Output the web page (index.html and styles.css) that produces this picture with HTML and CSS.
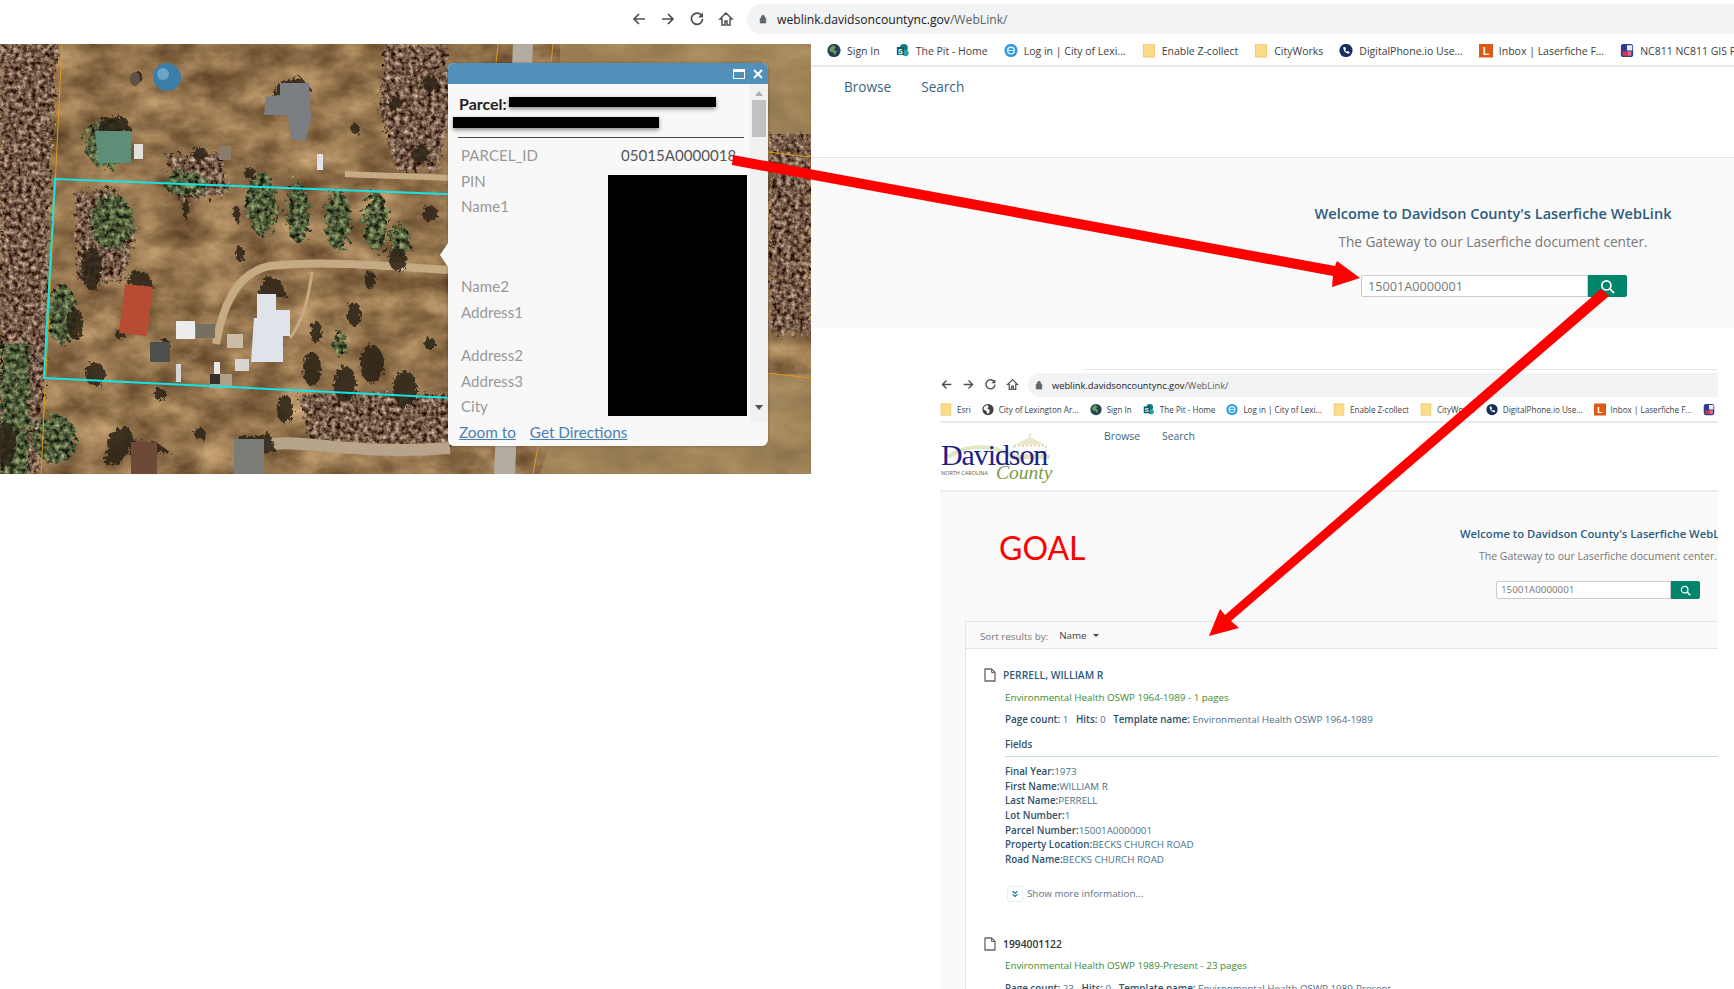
FILE: index.html
```html
<!DOCTYPE html>
<html lang="en">
<head>
  <meta charset="UTF-8" />
  <title>Parcel to WebLink search</title>
  <link rel="stylesheet" href="styles.css">
</head>
<body>

  <!-- shared icons -->
  <svg class="defs" width="0" height="0">
    <symbol id="i-back" viewBox="0 0 16 16"><path d="M14 8H3M8 3L3 8l5 5" fill="none" stroke="currentColor" stroke-width="1.7"/></symbol>
    <symbol id="i-fwd" viewBox="0 0 16 16"><path d="M2 8h11M8 3l5 5-5 5" fill="none" stroke="currentColor" stroke-width="1.7"/></symbol>
    <symbol id="i-reload" viewBox="0 0 16 16"><path d="M13 5.2A5.6 5.6 0 1 0 13.6 8" fill="none" stroke="currentColor" stroke-width="1.7"/><path d="M14 1.5v5h-5z" fill="currentColor"/></symbol>
    <symbol id="i-home" viewBox="0 0 16 16"><path d="M8 2L2 8h2v6h3v-4h2v4h3V8h2z" fill="none" stroke="currentColor" stroke-width="1.5"/></symbol>
    <symbol id="i-lock" viewBox="0 0 10 12"><path d="M1.5 5h7v6h-7zM3 5V3.4a2 2 0 0 1 4 0V5" fill="currentColor" stroke="currentColor" stroke-width=".8" fill-opacity=".9"/></symbol>
    <symbol id="i-folder" viewBox="0 0 14 16"><path d="M1 1h12v14H1z" fill="#fbdc8a" stroke="#eec768"/></symbol>
    <symbol id="i-earth" viewBox="0 0 16 16"><circle cx="8" cy="8" r="7.5" fill="#23405a"/><path d="M3 5l4-3 3 2-2 3 3 2-2 4-2-3-4-1z" fill="#6e9a56"/></symbol>
    <symbol id="i-pit" viewBox="0 0 16 16"><circle cx="9" cy="5" r="4.5" fill="#0b7c84"/><circle cx="11" cy="11" r="3.5" fill="#22a6a8"/><path d="M1 4h8v9H1z" fill="#075f66"/><text x="5" y="11.5" font-size="8" font-family="Liberation Sans" font-weight="700" fill="#fff" text-anchor="middle">S</text></symbol>
    <symbol id="i-login" viewBox="0 0 16 16"><circle cx="8" cy="8" r="7.5" fill="#2f9be0"/><circle cx="8" cy="8" r="3.8" fill="none" stroke="#d8f0fc" stroke-width="1.6"/><path d="M4 8h8" stroke="#d8f0fc" stroke-width="1.2"/></symbol>
    <symbol id="i-phone" viewBox="0 0 16 16"><circle cx="8" cy="8" r="7.5" fill="#15305c"/><path d="M5 4l2 0 1 2.5-1 1c.5 1 1.200 1.700 2 2l1-1 2 1.300v1.700c-4 .5-7.500-3-7-7.500z" fill="#fff"/></symbol>
    <symbol id="i-inbox" viewBox="0 0 16 16"><path d="M0 0h16v16H0z" fill="#dc5a16"/><text x="8" y="13" font-size="12" font-family="Liberation Sans" font-weight="700" fill="#fff" text-anchor="middle">L</text></symbol>
    <symbol id="i-nc811" viewBox="0 0 16 16"><rect x="1" y="0.500" width="14" height="15" rx="3" fill="#2b3f8e"/><path d="M8 2h6v6H8z" fill="#e8eef8"/><path d="M3 9h6v5H3z" fill="#d8344c"/><path d="M9 9h4v5H9z" fill="#f06a8c"/></symbol>
    <symbol id="i-globe" viewBox="0 0 16 16"><circle cx="8" cy="8" r="7.500" fill="#3c4043"/><path d="M3 4l4-2 2 2-2 3 3 1 0 4-3 2-1-4-4-2z" fill="#fff"/></symbol>
    <symbol id="i-search" viewBox="0 0 16 16"><circle cx="6.800" cy="6.800" r="4.800" fill="none" stroke="#fff" stroke-width="1.800"/><path d="M10.300 10.300L15 15" stroke="#fff" stroke-width="2"/></symbol>
    <symbol id="i-doc" viewBox="0 0 12 14"><path d="M1 1h6.500L11 4.500V13H1z" fill="#fff" stroke="#666" stroke-width="1.300" stroke-linejoin="round"/><path d="M7.500 1v3.500H11" fill="none" stroke="#666"/></symbol>
  </svg>

  <header class="toolbar">
    <div class="nav-icons">
      <svg><use href="#i-back"/></svg>
      <svg><use href="#i-fwd"/></svg>
      <svg><use href="#i-reload"/></svg>
      <svg><use href="#i-home"/></svg>
    </div>
    <div class="address">
      <svg class="lock"><use href="#i-lock"/></svg>
      <span class="host">weblink.davidsoncountync.gov</span><span class="path">/WebLink/</span>
    </div>
  </header>

  <main class="collage">

    <section class="map">
      <svg class="aerial" width="811" height="430" viewBox="0 0 811 430">
        <defs>
          <filter id="field" x="0" y="0" width="100%" height="100%" color-interpolation-filters="sRGB">
            <feTurbulence type="fractalNoise" baseFrequency="0.025 0.04" numOctaves="6" seed="8"/>
            <feColorMatrix values=".55 0 0 0 .3 .5 0 0 0 .2 .4 0 0 0 .1 0 0 0 0 1"/>
            <feComposite in2="SourceAlpha" operator="in"/>
          </filter>
          <filter id="woods" x="-5%" y="-5%" width="110%" height="110%" color-interpolation-filters="sRGB">
            <feTurbulence type="fractalNoise" baseFrequency="0.22" numOctaves="3" seed="3" result="n"/>
            <feDisplacementMap in="SourceAlpha" in2="n" scale="16" result="shape"/>
            <feColorMatrix in="n" values="1.100 0 0 0 -.1 1.100 0 0 0 -.2 1 0 0 0 -.22 0 0 0 0 1"/>
            <feComposite in2="shape" operator="in"/>
          </filter>
          <filter id="pines" x="-5%" y="-5%" width="110%" height="110%" color-interpolation-filters="sRGB">
            <feTurbulence type="fractalNoise" baseFrequency="0.2" numOctaves="3" seed="12" result="n"/>
            <feDisplacementMap in="SourceAlpha" in2="n" scale="18" result="shape"/>
            <feColorMatrix in="n" values=".9 0 0 0 -.14 1 0 0 0 -.14 .7 0 0 0 -.12 0 0 0 0 1"/>
            <feComposite in2="shape" operator="in"/>
          </filter>
          <filter id="rough" x="-20%" y="-20%" width="140%" height="140%">
            <feTurbulence type="fractalNoise" baseFrequency="0.3" numOctaves="2" seed="5"/>
            <feDisplacementMap in="SourceGraphic" scale="8"/>
          </filter>
        </defs>

        <rect width="811" height="430" fill="#9e7a54" filter="url(#field)"/>

        <!-- tree lines -->
        <g filter="url(#woods)">
          <path d="M0 0h58l-8 130-6 205-6 95H0z"/>
          <path d="M385 0h60l8 60-16 66h-40l-18-60z"/>
          <path d="M770 90h41v200h-41z"/>
          <path d="M300 350h150v52H310z"/>
          <path d="M75 150l40-6 22 40-14 50-45 4z"/>
          <path d="M165 110h55l10 40-50 8z"/>
        </g>
        <g filter="url(#pines)">
          <path d="M0 300h30l-2 130H0z"/>
          <ellipse cx="107" cy="100" rx="22" ry="24"/>
          <ellipse cx="262" cy="160" rx="15" ry="32"/>
          <ellipse cx="298" cy="168" rx="12" ry="30"/>
          <ellipse cx="338" cy="176" rx="13" ry="30"/>
          <ellipse cx="376" cy="178" rx="12" ry="30"/>
          <ellipse cx="400" cy="195" rx="10" ry="16"/>
          <ellipse cx="112" cy="178" rx="22" ry="28"/>
          <ellipse cx="186" cy="140" rx="22" ry="12"/>
          <ellipse cx="62" cy="270" rx="14" ry="30"/>
          <ellipse cx="55" cy="395" rx="22" ry="24"/>
          <ellipse cx="340" cy="300" rx="7" ry="13"/>
        </g>

        <!-- pasture on the right -->
        <path d="M560 0h251v90H560zM768 330h43v100H540l10-30h218z" fill="#a58c60" opacity=".7"/>

        <!-- road -->
        <path d="M513 0h20l-18 430h-21z" fill="#b3aca0"/>

        <!-- drives -->
        <g fill="none" stroke="#c5ab84">
          <path d="M448 226C390 222 320 216 270 222 235 228 222 265 216 300" stroke-width="8"/>
          <path d="M312 228c-4 30-10 50-22 66" stroke-width="3"/>
          <path d="M345 130c40 2 70 2 105 4" stroke-width="6"/>
          <path d="M260 402c40-10 80 10 190 2" stroke-width="12" stroke="#b7a48a"/>
        </g>

        <!-- dark tree tops and shadows -->
        <g fill="#2b2318" opacity=".85" filter="url(#rough)">
          <path d="M270 62l8-22 22-8 12 14-10 8-20 4-4 12z"/>
          <circle cx="137" cy="32" r="5"/>
          <path d="M96 87l8-14h22l6 14z"/>
          <path d="M126 240l8-14 14 4 6 14z"/>
          <path d="M258 250l8-18 14 4 8 18z"/>
          <ellipse cx="354" cy="270" rx="7" ry="12"/>
          <ellipse cx="316" cy="288" rx="6" ry="11"/>
          <ellipse cx="370" cy="236" rx="6" ry="9"/>
          <ellipse cx="398" cy="215" rx="9" ry="12"/>
          <ellipse cx="240" cy="210" rx="4" ry="8"/>
          <ellipse cx="186" cy="165" rx="3" ry="11"/>
          <ellipse cx="237" cy="170" rx="3" ry="9"/>
          <ellipse cx="312" cy="325" rx="9" ry="17"/>
          <ellipse cx="345" cy="340" rx="11" ry="18"/>
          <ellipse cx="372" cy="320" rx="12" ry="19"/>
          <ellipse cx="405" cy="345" rx="12" ry="18"/>
          <ellipse cx="285" cy="365" rx="8" ry="14"/>
          <ellipse cx="92" cy="225" rx="10" ry="22"/>
          <ellipse cx="75" cy="280" rx="8" ry="16"/>
          <ellipse cx="95" cy="330" rx="10" ry="12"/>
          <ellipse cx="6" cy="400" rx="10" ry="22"/>
          <path d="M238 392h24l6-6 8 22-36 4z"/>
          <path d="M130 398h26l14 10-40 4z"/>
          <path d="M110 388l18-6 6 14-14 24h-16z"/>
          <circle cx="200" cy="110" r="7"/>
          <circle cx="250" cy="130" r="6"/>
          <circle cx="120" cy="290" r="5"/>
          <circle cx="165" cy="300" r="5"/>
          <circle cx="430" cy="170" r="8"/>
          <circle cx="420" cy="110" r="9"/>
          <circle cx="395" cy="60" r="7"/>
          <circle cx="430" cy="40" r="8"/>
          <circle cx="355" cy="85" r="5"/>
          <circle cx="200" cy="390" r="6"/>
          <circle cx="160" cy="350" r="6"/>
          <circle cx="430" cy="300" r="6"/>
        </g>

        <!-- buildings -->
        <circle cx="167" cy="33" r="14" fill="#3d7ea6"/>
        <circle cx="163" cy="30" r="6" fill="#6aa5c8"/>
        <ellipse cx="135" cy="35" rx="5" ry="7" fill="#5c5246"/>
        <path d="M280 39h29l2 38-6 20-14-2-3-24h-24l2-18 14-2z" fill="#7b7f84"/>
        <path d="M95 87h36v32H98z" fill="#5e8d78"/>
        <path d="M134 100h9v15h-9z" fill="#e2e0da"/>
        <path d="M219 102h12v14h-12z" fill="#8a7d6c"/>
        <path d="M317 110h6v16h-6z" fill="#dfe4ea"/>
        <path d="M125 240l28 3-6 49-28-3z" fill="#b84c33"/>
        <path d="M176 277h19v18h-19z" fill="#ececec"/>
        <path d="M196 280h19v14h-19z" fill="#76705f"/>
        <path d="M257 250h19v16h14v26h-7v26h-32l3-44h3z" fill="#dfe3ea"/>
        <path d="M150 298h20v20h-20z" fill="#4f4f4d"/>
        <path d="M227 290h16v14h-16z" fill="#c9bda6"/>
        <path d="M235 315h14v12h-14z" fill="#d8d6d0"/>
        <path d="M214 318h6v20h-6z" fill="#e6e6e4"/>
        <path d="M176 320h5v18h-5z" fill="#d7d7d5"/>
        <path d="M131 398h26v32h-26z" fill="#6d4a38"/>
        <path d="M234 395h30v35h-30z" fill="#7b7b78"/>
        <path d="M210 330h22v14h-22z" fill="#ada18a"/>
        <path d="M210 330h10v10h-10z" fill="#36302a"/>

        <!-- parcel lines -->
        <g fill="none" stroke="#dc9a1e">
          <path d="M62 0L41 430"/>
          <path d="M498 0l-2 19"/>
          <path d="M553 0l-2 19M538 402l-5 28"/>
          <path d="M768 108l43 5M768 329l43 5"/>
        </g>
        <path d="M600 156L55 135 44 334 600 361" fill="none" stroke="#14e4e4" stroke-width="2"/>
      </svg>

      <div class="popup">
        <div class="popup-head">
          <span class="btn-max"></span>
          <svg class="btn-close" viewBox="0 0 10 10"><path d="M1 1l8 8M9 1l-8 8" stroke="#fff" stroke-width="2"/></svg>
        </div>
        <div class="popup-body">
          <div class="popup-scroll">
            <div class="popup-title">Parcel:</div>
            <span class="redact redact-a"></span>
            <span class="redact redact-b"></span>
            <div class="fields">
              <div class="key">PARCEL_ID</div>
              <div class="val">05015A0000018</div>
              <div class="blackout"></div>
              <div class="key">PIN</div>
              <div class="key tall-a">Name1</div>
              <div class="key">Name2</div>
              <div class="key tall-b">Address1</div>
              <div class="key">Address2</div>
              <div class="key">Address3</div>
              <div class="key">City</div>
            </div>
          </div>
          <div class="scrollbar">
            <span class="arrow-up"></span>
            <span class="thumb"></span>
            <span class="arrow-down"></span>
          </div>
        </div>
        <div class="popup-links">
          <a href="#">Zoom to</a>
          <a href="#">Get Directions</a>
        </div>
        <span class="pointer"></span>
      </div>
    </section>

    <section class="site">
      <div class="bookmarks">
        <a class="bm bm-signin"><svg><use href="#i-earth"/></svg>Sign In</a>
        <a class="bm"><svg><use href="#i-pit"/></svg>The Pit - Home</a>
        <a class="bm"><svg><use href="#i-login"/></svg>Log in | City of Lexi...</a>
        <a class="bm"><svg><use href="#i-folder"/></svg>Enable Z-collect</a>
        <a class="bm"><svg><use href="#i-folder"/></svg>CityWorks</a>
        <a class="bm"><svg><use href="#i-phone"/></svg>DigitalPhone.io Use...</a>
        <a class="bm"><svg><use href="#i-inbox"/></svg>Inbox | Laserfiche F...</a>
        <a class="bm"><svg><use href="#i-nc811"/></svg>NC811 NC811 GIS Portal</a>
      </div>
      <nav class="site-nav">
        <a href="#">Browse</a>
        <a href="#">Search</a>
      </nav>
      <div class="hero">
        <div class="hero-inner">
          <h2>Welcome to Davidson County's Laserfiche WebLink</h2>
          <p>The Gateway to our Laserfiche document center.</p>
          <div class="searchbox">
            <span class="query">15001A0000001</span>
            <span class="go"><svg><use href="#i-search"/></svg></span>
          </div>
        </div>
      </div>

      <div class="goal">
        <div class="goal-line"></div>
        <div class="goal-address-row">
          <div class="nav-icons small">
            <svg><use href="#i-back"/></svg>
            <svg><use href="#i-fwd"/></svg>
            <svg><use href="#i-reload"/></svg>
            <svg><use href="#i-home"/></svg>
          </div>
          <div class="address small">
            <svg class="lock"><use href="#i-lock"/></svg>
            <span class="host">weblink.davidsoncountync.gov</span><span class="path">/WebLink/</span>
          </div>
        </div>
        <div class="bookmarks small">
          <a class="bm"><svg><use href="#i-folder"/></svg>Esri</a>
          <a class="bm"><svg><use href="#i-globe"/></svg>City of Lexington Ar...</a>
          <a class="bm"><svg><use href="#i-earth"/></svg>Sign In</a>
          <a class="bm"><svg><use href="#i-pit"/></svg>The Pit - Home</a>
          <a class="bm"><svg><use href="#i-login"/></svg>Log in | City of Lexi...</a>
          <a class="bm"><svg><use href="#i-folder"/></svg>Enable Z-collect</a>
          <a class="bm"><svg><use href="#i-folder"/></svg>CityWorks</a>
          <a class="bm"><svg><use href="#i-phone"/></svg>DigitalPhone.io Use...</a>
          <a class="bm"><svg><use href="#i-inbox"/></svg>Inbox | Laserfiche F...</a>
          <a class="bm"><svg><use href="#i-nc811"/></svg>NC811</a>
        </div>

        <div class="goal-head">
          <div class="logo">
            <svg class="logo-art" width="116" height="54" viewBox="0 0 116 54">
              <path d="M8 24C28 10 52 12 70 22" fill="none" stroke="#dfe8c4" stroke-width="4"/>
              <path d="M70 22h40v4H70z" fill="#e8e2c4"/>
              <path d="M74 12L90 4l16 8z" fill="#ece6cc"/>
              <path d="M90 0v4" stroke="#d8d0a8"/>
              <path d="M74 13h32v9H74z" fill="none" stroke="#e4dcbc" stroke-width="2" stroke-dasharray="2 2"/>
            </svg>
            <span class="logo-name">Davidson</span>
            <span class="logo-state">NORTH CAROLINA</span>
            <span class="logo-county">County</span>
          </div>
          <nav class="site-nav small">
            <a href="#">Browse</a>
            <a href="#">Search</a>
          </nav>
        </div>

        <div class="goal-body">
          <div class="goal-hero">
            <div class="goal-label">GOAL</div>
            <div class="goal-welcome">
              <h3>Welcome to Davidson County's Laserfiche WebLink</h3>
              <p>The Gateway to our Laserfiche document center.</p>
              <div class="searchbox small">
                <span class="query">15001A0000001</span>
                <span class="go"><svg><use href="#i-search"/></svg></span>
              </div>
            </div>
          </div>

          <div class="results">
            <div class="sortbar">
              <span class="sort-label">Sort results by:</span>
              <span class="sort-value">Name</span>
              <span class="caret"></span>
            </div>

            <article class="result">
              <div class="result-title"><svg><use href="#i-doc"/></svg><a>PERRELL, WILLIAM R</a></div>
              <div class="result-path">Environmental Health OSWP 1964-1989 - 1 pages</div>
              <div class="result-meta"><b>Page count:</b> 1 &nbsp; <b>Hits:</b> 0 &nbsp; <b>Template name:</b> Environmental Health OSWP 1964-1989</div>
              <div class="fields-head">Fields</div>
              <ul class="field-list">
                <li><b>Final Year:</b>1973</li>
                <li><b>First Name:</b>WILLIAM R</li>
                <li><b>Last Name:</b>PERRELL</li>
                <li><b>Lot Number:</b>1</li>
                <li><b>Parcel Number:</b>15001A0000001</li>
                <li><b>Property Location:</b>BECKS CHURCH ROAD</li>
                <li><b>Road Name:</b>BECKS CHURCH ROAD</li>
              </ul>
              <div class="show-more">
                <span class="more-btn"><svg viewBox="0 0 10 10"><path d="M2 1.500l3 2.500 3-2.500M2 5.500l3 2.500 3-2.500" fill="none" stroke="#1a7896" stroke-width="1.500"/></svg></span>
                Show more information...
              </div>
            </article>

            <article class="result second">
              <div class="result-title"><svg><use href="#i-doc"/></svg><a>1994001122</a></div>
              <div class="result-path">Environmental Health OSWP 1989-Present - 23 pages</div>
              <div class="result-meta"><b>Page count:</b> 23 &nbsp; <b>Hits:</b> 0 &nbsp; <b>Template name:</b> Environmental Health OSWP 1989-Present</div>
            </article>
          </div>
        </div>
      </div>
    </section>
  </main>

  <!-- the red arrows drawn over the whole collage -->
  <svg class="arrows" width="1734" height="989" viewBox="0 0 1734 989">
    <path d="M733 155L1335 266 1337 261 1360 278 1332 287 1333 276 732 165z" fill="#f00"/>
    <path d="M1601 289L1609 296 1231 621 1239 628 1209 636 1220 609 1225 615z" fill="#f00"/>
  </svg>

</body>
</html>
```

FILE: styles.css
```css
/* Base */
* {
  box-sizing: border-box;
}
html, body {
  margin: 0;
  height: 989px;
  overflow: hidden;
}
body {
  position: relative;
  background: #fff;
  font-family: "Open Sans", sans-serif;
  color: #444;
}
a {
  color: inherit;
  text-decoration: none;
}
.defs {
  position: absolute;
}

/* Browser toolbar */
.toolbar {
  height: 44px;
  display: flex;
  align-items: flex-start;
  padding: 4px 0 0 631px;
}
.nav-icons {
  display: flex;
  gap: 13px;
  padding-top: 7px;
  color: #4d5156;
}
.nav-icons svg {
  width: 16px;
  height: 16px;
}
.address {
  flex: 1;
  height: 30px;
  margin-left: 13px;
  display: flex;
  align-items: center;
  padding-left: 12px;
  background: #f1f3f4;
  border-radius: 15px 0 0 15px;
  font-size: 12.15px;
  white-space: nowrap;
}
.lock {
  width: 8px;
  height: 10px;
  margin-right: 10px;
  color: #55595e;
}
.host {
  color: #202124;
}
.path {
  color: #5f6368;
}

/* Left: the aerial with its popup */
.collage {
  display: grid;
  grid-template-columns: 811px 923px;
  align-items: start;
}
.map {
  position: relative;
  height: 430px;
}
.aerial {
  display: block;
}
.popup {
  position: absolute;
  left: 448px;
  top: 19px;
  width: 320px;
  height: 383px;
  display: flex;
  flex-direction: column;
  background: #f8f8f8;
  border-radius: 6px;
  font-family: "Lato", sans-serif;
  box-shadow: 0 0 3px rgba(0, 0, 0, .3);
}
.popup-head {
  height: 21px;
  flex: none;
  display: flex;
  justify-content: flex-end;
  align-items: center;
  gap: 8px;
  padding: 1px 5px 0 0;
  background: #5390b9;
  border-radius: 6px 6px 0 0;
}
.btn-max {
  width: 12px;
  height: 10px;
  border: 1px solid #fff;
  border-top-width: 3px;
}
.btn-close {
  width: 10px;
  height: 10px;
}
.popup-body {
  flex: 1;
  display: flex;
  min-height: 0;
}
.popup-scroll {
  position: relative;
  width: 302px;
  padding: 10px 0 0 10px;
}
.popup-title {
  height: 44px;
  width: 286px;
  padding-left: 1px;
  border-bottom: 1px solid #444;
  color: #222;
  font-size: 16px;
  font-weight: 700;
  line-height: 20px;
}
.redact {
  position: absolute;
  background: #000;
  box-shadow: 0 2px 4px rgba(0, 0, 0, .45);
}
.redact-a {
  left: 61px;
  top: 13px;
  width: 207px;
  height: 10px;
}
.redact-b {
  left: 5px;
  top: 33px;
  width: 206px;
  height: 11px;
}
.fields {
  display: grid;
  grid-template-columns: 147px 139px;
  margin: 5px 0 0 3px;
  font-size: 15.1px;
  line-height: 25.5px;
}
.key {
  grid-column: 1;
  color: #999;
}
.tall-a {
  padding-bottom: 54.9px;
}
.tall-b {
  padding-bottom: 18px;
}
.val {
  grid-column: 2;
  grid-row: 1;
  padding-left: 13px;
  color: #555;
  white-space: nowrap;
}
.blackout {
  grid-column: 2;
  grid-row: 2 / span 7;
  margin: 6px 0 4px;
  background: #000;
}
.scrollbar {
  width: 18px;
  height: 338px;
  display: flex;
  flex-direction: column;
  align-items: center;
  padding-top: 7px;
  background: #f1f1f1;
}
.arrow-up,
.arrow-down {
  width: 0;
  height: 0;
  border-left: 4px solid transparent;
  border-right: 4px solid transparent;
}
.arrow-up {
  border-bottom: 5px solid #b0b0b0;
}
.arrow-down {
  margin-top: 268px;
  border-top: 5px solid #505050;
}
.thumb {
  width: 14px;
  height: 37px;
  margin-top: 4px;
  background: #c1c1c1;
}
.popup-links {
  height: 24px;
  flex: none;
  display: flex;
  gap: 14px;
  padding: 0 0 0 11px;
  font-size: 15.3px;
  line-height: 20px;
  color: #4a80b4;
}
.popup-links a {
  text-decoration: underline;
}
.pointer {
  position: absolute;
  left: -8px;
  top: 180px;
  width: 0;
  height: 0;
  border-top: 12px solid transparent;
  border-bottom: 12px solid transparent;
  border-right: 8px solid #f8f8f8;
}

/* Right: the WebLink page */
.bookmarks {
  height: 23px;
  display: flex;
  align-items: center;
  padding: 0 0 8px 16px;
  border-bottom: 2px solid #e8eaed;
  font-size: 10.5px;
  color: #3c4043;
  white-space: nowrap;
  overflow: hidden;
}
.bm {
  display: flex;
  align-items: center;
  gap: 6px;
  margin-right: 16px;
}
.bm svg {
  width: 14px;
  height: 15px;
  flex: none;
}
.site-nav {
  height: 90px;
  display: flex;
  gap: 30px;
  padding: 10px 0 0 33px;
  font-size: 13.6px;
  color: #3b6680;
}
.hero {
  height: 171px;
  padding: 44px 0 0 482px;
  background: #fafafa;
  border-top: 1px solid #e5e5e5;
}
.hero-inner {
  width: 400px;
  text-align: center;
}
.hero h2 {
  margin: 0;
  font-size: 14.55px;
  font-weight: 600;
  line-height: 22px;
  color: #2b5c7e;
}
.hero p {
  margin: 8px 0 23px;
  font-size: 13.65px;
  line-height: 20px;
  color: #777;
}
.searchbox {
  display: flex;
  width: 266px;
  height: 22px;
  margin-left: 68px;
  text-align: left;
}
.query {
  flex: 1;
  padding-left: 6px;
  background: #fff;
  border: 1px solid #ccc;
  border-radius: 2px 0 0 2px;
  font-size: 12.7px;
  line-height: 20px;
  color: #777;
}
.go {
  width: 39px;
  display: flex;
  align-items: center;
  justify-content: center;
  background: #00856a;
  border-radius: 0 2px 2px 0;
}
.go svg {
  width: 15px;
  height: 15px;
}

/* The smaller "goal" screenshot */
.goal {
  width: 778px;
  height: 620px;
  margin: 41px 0 0 129px;
  overflow: hidden;
}
.goal-line {
  height: 1px;
  margin-left: 144px;
  background: #e5e5e5;
}
.goal-address-row {
  display: flex;
  height: 28px;
  padding-top: 3px;
}
.nav-icons.small {
  gap: 9px;
  padding: 5px 0 0 0;
}
.nav-icons.small svg {
  width: 13px;
  height: 13px;
}
.address.small {
  height: 24px;
  margin-left: 9px;
  padding-left: 7px;
  font-size: 9.3px;
  border-radius: 12px 0 0 12px;
}
.address.small .lock {
  margin-right: 9px;
}
.bookmarks.small {
  height: 25px;
  padding: 0;
  font-size: 8.1px;
}
.bookmarks.small .bm {
  gap: 5px;
  margin-right: 11px;
}
.bookmarks.small .bm svg {
  width: 12px;
  height: 13px;
}
.goal-head {
  height: 69px;
  display: flex;
  border-bottom: 2px solid #eee;
}
.logo {
  position: relative;
  width: 135px;
  height: 66px;
  flex: none;
}
.logo-art {
  position: absolute;
  left: 0;
  top: 10px;
}
.logo-name {
  position: absolute;
  left: 1px;
  top: 13px;
  font-family: "Liberation Serif", serif;
  font-size: 30px;
  line-height: 38px;
  letter-spacing: -1.1px;
  color: #1c2285;
}
.logo-state {
  position: absolute;
  left: 1px;
  top: 47px;
  font-size: 5.5px;
  line-height: 6px;
  white-space: nowrap;
  color: #555;
}
.logo-county {
  position: absolute;
  left: 56px;
  top: 38px;
  font-family: "Liberation Serif", serif;
  font-size: 19.5px;
  font-style: italic;
  line-height: 24px;
  color: #7c9a4a;
}
.site-nav.small {
  height: auto;
  gap: 22px;
  padding: 6px 0 0 29px;
  font-size: 10.4px;
}
.goal-body {
  padding-left: 25px;
  background: #fafafa;
}
.goal-hero {
  height: 129px;
  display: flex;
  justify-content: space-between;
}
.goal-label {
  padding: 36px 0 0 34px;
  font-family: "Lato", sans-serif;
  font-size: 32px;
  line-height: 40px;
  color: #f00;
}
.goal-welcome {
  flex: none;
  width: 300px;
  margin-right: -30px;
  padding-top: 33px;
  text-align: center;
  white-space: nowrap;
}
.goal-welcome h3 {
  margin: 0;
  font-size: 11.25px;
  font-weight: 600;
  line-height: 18px;
  color: #2b5c7e;
}
.goal-welcome p {
  margin: 5px 0 17px;
  font-size: 10.5px;
  line-height: 16px;
  color: #777;
}
.searchbox.small {
  width: 204px;
  height: 18px;
  margin-left: 48px;
}
.searchbox.small .query {
  padding-left: 4px;
  font-size: 9.8px;
  line-height: 16px;
}
.searchbox.small .go {
  width: 29px;
}
.searchbox.small .go svg {
  width: 11px;
  height: 11px;
}
.results {
  min-height: 400px;
  background: #fff;
  border-left: 1px solid #e5e5e5;
  border-top: 1px solid #e5e5e5;
  font-size: 9.8px;
}
.sortbar {
  height: 27px;
  display: flex;
  align-items: center;
  padding-left: 14px;
  background: #fafafa;
  border-bottom: 1px solid #e5e5e5;
}
.sort-label {
  padding-top: 2px;
  color: #777;
}
.sort-value {
  margin-left: 11px;
  color: #444;
}
.caret {
  width: 0;
  height: 0;
  margin-left: 6px;
  border-left: 3px solid transparent;
  border-right: 3px solid transparent;
  border-top: 3px solid #444;
}
.result {
  padding: 19px 0 0 18px;
}
.result.second {
  padding-top: 35px;
}
.result-title {
  display: flex;
  align-items: center;
  gap: 7px;
  height: 14px;
  font-size: 10.3px;
  font-weight: 600;
  color: #2b5c7e;
}
.result.second .result-title {
  color: #333;
}
.result-title svg {
  width: 12px;
  height: 14px;
}
.result-path {
  margin: 8.5px 0 0 21px;
  line-height: 14px;
  color: #3d8b2f;
}
.result-meta {
  margin: 8.5px 0 0 21px;
  line-height: 14px;
  color: #4a7088;
}
.result-meta b,
.field-list b {
  font-weight: 600;
  color: #2f5168;
}
.fields-head {
  margin: 11px 0 0 21px;
  padding-bottom: 5px;
  height: 19px;
  border-bottom: 1px solid #c8dde6;
  font-weight: 600;
  color: #2f5168;
}
.field-list {
  margin: 8px 0 0 21px;
  padding: 0;
  list-style: none;
  line-height: 14.67px;
  color: #4a7088;
}
.show-more {
  display: flex;
  align-items: center;
  gap: 4px;
  margin: 18px 0 0 23px;
  color: #5a7485;
}
.more-btn {
  width: 16px;
  height: 16px;
  padding: 3px;
  border: 1px solid #e6eef2;
  border-radius: 2px;
}
.more-btn svg {
  display: block;
}

.arrows {
  position: absolute;
  left: 0;
  top: 0;
}
```
